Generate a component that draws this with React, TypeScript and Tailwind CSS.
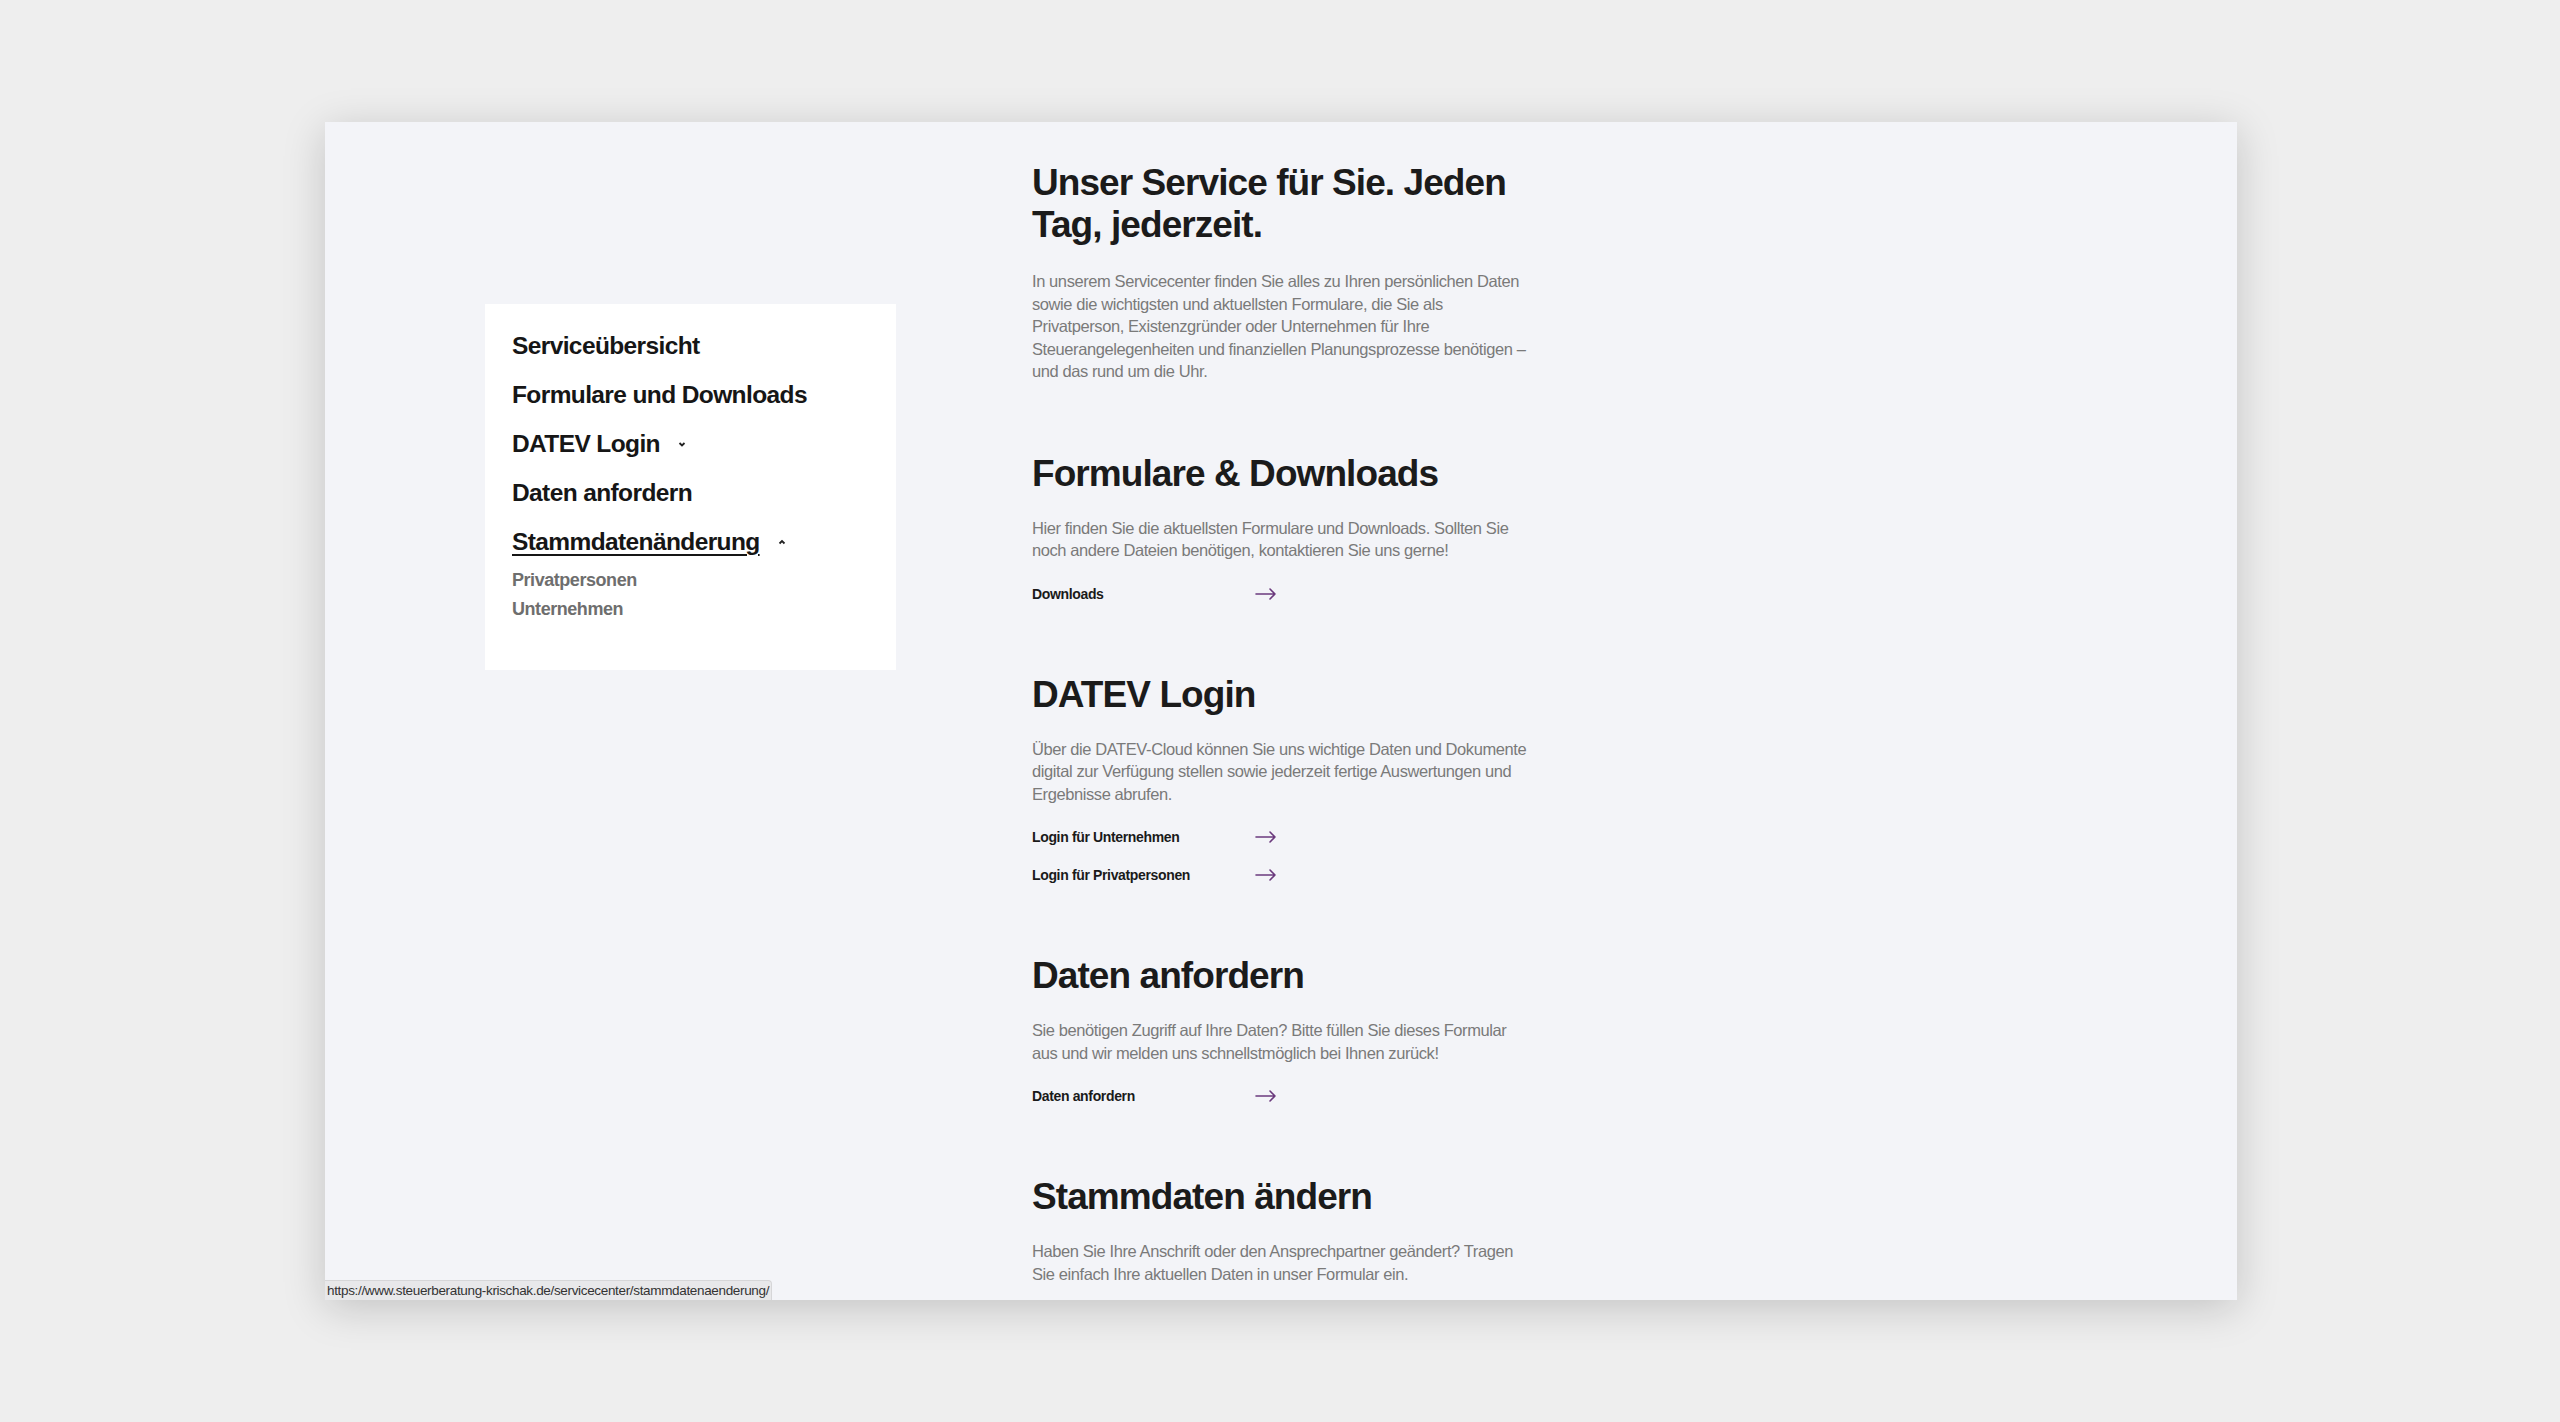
const Arrow = () => (
  <svg width="22" height="12" viewBox="0 0 22 12" fill="none" stroke="#6b3a7d" strokeWidth="1.6" strokeLinecap="round" strokeLinejoin="round">
    <path d="M1 6h19M15 1l5 5-5 5" />
  </svg>
);

function LinkRow({ label }: { label: string }) {
  return (
    <a href="#" className="flex items-center w-[245px] justify-between text-[14px] font-bold text-[#1a1a1a] tracking-tight leading-[20px]">
      <span>{label}</span>
      <Arrow />
    </a>
  );
}

function Section({ title, text, links }: { title: string; text: string; links: string[] }) {
  return (
    <section className="mt-[70px]">
      <h2 className="text-[37px] leading-[42px] font-bold tracking-tight text-[#1b1b1b]">{title}</h2>
      <p className="mt-[22px] text-[16.5px] leading-[22.5px] text-[#7a7a7a] tracking-tight">{text}</p>
      <div className="mt-[22px] flex flex-col gap-[18px]">
        {links.map((l) => (
          <LinkRow key={l} label={l} />
        ))}
      </div>
    </section>
  );
}

export default function App() {
  return (
    <div className="min-h-screen bg-[#eeeeee] pt-[122px] pl-[325px]" style={{ fontFamily: '"Liberation Sans", Arial, sans-serif' }}>
      <div className="relative w-[1912px] h-[1178px] bg-[#f3f4f8] overflow-hidden shadow-[0_8px_40px_rgba(0,0,0,0.18)]">
        <div className="flex pl-[160px]">
          {/* sidebar */}
          <aside className="mt-[182px] w-[411px] h-[366px] bg-white pt-[28px] pl-[27px] shrink-0">
            <ul className="flex flex-col gap-[21px] text-[24.5px] leading-[28px] text-[#161616] tracking-tight font-bold">
              <li>Serviceübersicht</li>
              <li>Formulare und Downloads</li>
              <li className="flex items-center gap-4">
                DATEV Login
                <svg width="12" height="12" viewBox="0 0 12 12" fill="none" stroke="#222" strokeWidth="1.8"><path d="M3.5 5l2.5 2.5L8.5 5" /></svg>
              </li>
              <li>Daten anfordern</li>
              <li className="flex items-center gap-4">
                <span className="underline underline-offset-4 decoration-2">Stammdatenänderung</span>
                <svg width="12" height="12" viewBox="0 0 12 12" fill="none" stroke="#222" strokeWidth="1.8"><path d="M3.5 7.5L6 5l2.5 2.5" /></svg>
              </li>
            </ul>
            <ul className="mt-[14px] flex flex-col gap-[9px] text-[18px] leading-[20px] text-[#6e6e6e] tracking-tight font-bold">
              <li>Privatpersonen</li>
              <li>Unternehmen</li>
            </ul>
          </aside>

          {/* content */}
          <main className="ml-[136px] w-[495px] pt-[40px]">
            <h1 className="text-[37px] leading-[42px] font-bold tracking-tight text-[#1b1b1b]">
              Unser Service für Sie. Jeden Tag, jederzeit.
            </h1>
            <p className="mt-[24px] text-[16.5px] leading-[22.5px] text-[#7a7a7a] tracking-tight">
              In unserem Servicecenter finden Sie alles zu Ihren persönlichen Daten sowie die wichtigsten und aktuellsten Formulare, die Sie als Privatperson, Existenzgründer oder Unternehmen für Ihre Steuerangelegenheiten und finanziellen Planungsprozesse benötigen – und das rund um die Uhr.
            </p>
            <Section
              title="Formulare & Downloads"
              text="Hier finden Sie die aktuellsten Formulare und Downloads. Sollten Sie noch andere Dateien benötigen, kontaktieren Sie uns gerne!"
              links={["Downloads"]}
            />
            <Section
              title="DATEV Login"
              text="Über die DATEV-Cloud können Sie uns wichtige Daten und Dokumente digital zur Verfügung stellen sowie jederzeit fertige Auswertungen und Ergebnisse abrufen."
              links={["Login für Unternehmen", "Login für Privatpersonen"]}
            />
            <Section
              title="Daten anfordern"
              text="Sie benötigen Zugriff auf Ihre Daten? Bitte füllen Sie dieses Formular aus und wir melden uns schnellstmöglich bei Ihnen zurück!"
              links={["Daten anfordern"]}
            />
            <Section
              title="Stammdaten ändern"
              text="Haben Sie Ihre Anschrift oder den Ansprechpartner geändert? Tragen Sie einfach Ihre aktuellen Daten in unser Formular ein."
              links={[]}
            />
          </main>
        </div>

        {/* status bar */}
        <div className="absolute left-0 bottom-0 h-[20px] px-[2px] bg-[#e8e8ea] border-t border-r border-[#d6d6d8] rounded-tr-[4px] text-[13.5px] leading-[19px] text-[#333] tracking-tight">
          https://www.steuerberatung-krischak.de/servicecenter/stammdatenaenderung/
        </div>
      </div>
    </div>
  );
}
